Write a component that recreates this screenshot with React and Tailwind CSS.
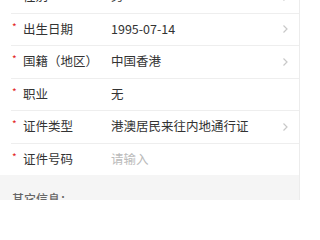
const rows = [
  { label: "性别", value: "男", arrow: true },
  { label: "出生日期", value: "1995-07-14", arrow: true },
  { label: "国籍（地区）", value: "中国香港", arrow: true },
  { label: "职业", value: "无", arrow: false },
  { label: "证件类型", value: "港澳居民来往内地通行证", arrow: true },
  { label: "证件号码", value: "请输入", placeholder: true, last: true },
];

function Chevron() {
  return (
    <svg width="7" height="10" viewBox="0 0 7 10" className="shrink-0">
      <path d="M1.5 1.5 L5 5 L1.5 8.5" fill="none" stroke="#c8c8c8" strokeWidth="1.2" />
    </svg>
  );
}

export default function App() {
  return (
    <div
      className="w-[300px] h-[200px] overflow-hidden bg-white border-r border-[#ececec]"
      style={{ fontFamily: '"Noto Sans CJK SC", "Noto Sans", sans-serif' }}
    >
      <div className="-mt-[19px] pl-[11px]">
        {rows.map((row, i) => (
          <div
            key={i}
            className={`flex items-center pr-[10px] ${row.last ? "h-[31px]" : "h-[32.5px] border-b border-[#eeeeee]"}`}
          >
            <div className="w-[100px] flex items-center shrink-0">
              <span className="w-[12px] text-[#e2231a] text-[10px] leading-none self-start mt-[2px] pl-[1px]">*</span>
              <span className="text-[12.5px] text-[#333333]">{row.label}</span>
            </div>
            <span
              className={`flex-1 text-[12.5px] ${row.placeholder ? "text-[#bbbbbb]" : "text-[#333333]"}`}
            >
              {row.value}
            </span>
            {row.arrow && <Chevron />}
          </div>
        ))}
      </div>
      <div className="bg-[#f5f5f5] h-[40px] px-[12px] pt-[10px]">
        <span className="text-[12px] text-[#666666] font-medium">其它信息：</span>
      </div>
    </div>
  );
}
